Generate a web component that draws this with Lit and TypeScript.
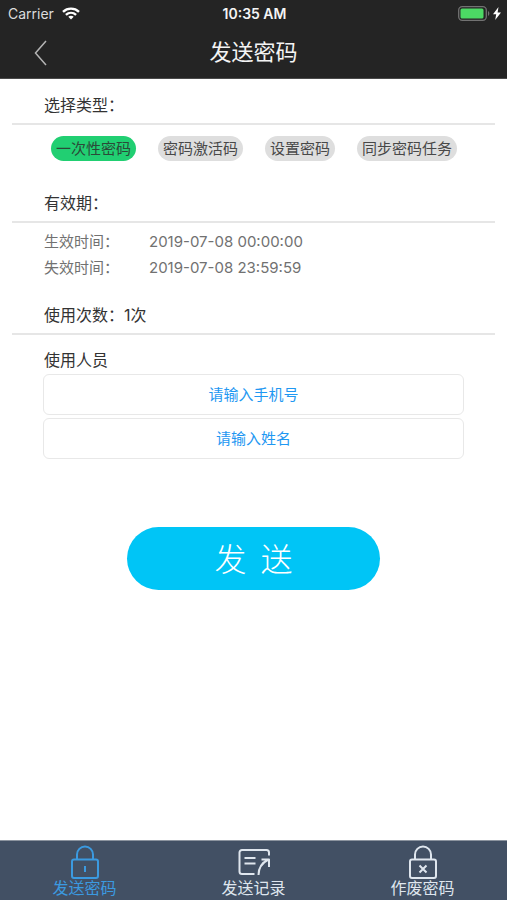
import { LitElement, html, css, svg } from "lit";
import { customElement, state } from "lit/decorators.js";
import { classMap } from "lit/directives/class-map.js";

const lockBody = svg`
  <path d="M9 14.500V9.500a8 8 0 0 1 16 0v5" />
  <rect x="4" y="14.500" width="26" height="18.500" rx="2" />
`;

const sendIcon = html`<svg class="tab-icon" viewBox="0 0 34 36" aria-hidden="true">
  ${lockBody}
  <path d="M17 21v6" />
</svg>`;

const recordIcon = html`<svg class="tab-icon" viewBox="0 0 34 36" aria-hidden="true">
  <path d="M32 10.500V7.500a2.500 2.500 0 0 0-2.500-2.500h-24.500A2.500 2.500 0 0 0 2.500 7.500v19A2.500 2.500 0 0 0 5 29h12.500" />
  <path d="M7.500 13h11M7.500 18.500h11" />
  <path d="M21.500 30c0-6 3-12 10-15.500M24.500 14.500h7.500v7.500" />
</svg>`;

const voidIcon = html`<svg class="tab-icon" viewBox="0 0 34 36" aria-hidden="true">
  ${lockBody}
  <path d="M13.500 20.500l7 7M20.500 20.500l-7 7" />
</svg>`;

@customElement("app-root")
export class AppRoot extends LitElement {
  @state() private type = "一次性密码";

  private types = ["一次性密码", "密码激活码", "设置密码", "同步密码任务"];

  private tabs = [
    { id: "send", label: "发送密码", icon: sendIcon },
    { id: "records", label: "发送记录", icon: recordIcon },
    { id: "void", label: "作废密码", icon: voidIcon },
  ];

  static styles = css`
    :host {
      display: flex;
      flex-direction: column;
      min-height: 100vh;
      background: #fff;
      color: #333;
      font-family: Inter, "Noto Sans CJK SC", sans-serif;
      font-size: 16px;
      line-height: 24px;
    }
    * {
      box-sizing: border-box;
    }
    button,
    input {
      font: inherit;
      margin: 0;
    }
    .top {
      background: #242424;
      color: #f4f4f4;
      border-bottom: 1px solid #4a4a4a;
    }
    .status,
    .nav {
      display: grid;
      grid-template-columns: 1fr auto 1fr;
      align-items: center;
    }
    .status {
      height: 27px;
      padding: 0 6px 0 8px;
      font-size: 14px;
    }
    .carrier,
    .power {
      display: flex;
      align-items: center;
      gap: 8px;
    }
    .carrier {
      color: #dcdcdc;
    }
    .clock {
      font-weight: 600;
    }
    .power {
      justify-content: flex-end;
      gap: 3px;
    }
    .wifi {
      width: 18px;
      height: 13px;
    }
    .battery {
      width: 32px;
      height: 15px;
    }
    .bolt {
      width: 8px;
      height: 13px;
    }
    .nav {
      height: 51px;
    }
    .back {
      display: flex;
      justify-self: start;
      padding: 8px 32px;
      border: 0;
      background: none;
      color: #b4b4b4;
    }
    .back svg {
      width: 16px;
      height: 26px;
    }
    .title {
      margin: 0;
      padding-bottom: 2px;
      font-size: 22px;
      line-height: 32px;
      font-weight: 400;
    }
    main {
      padding: 14px 12px 24px;
    }
    .heading {
      margin: 0;
      padding: 0 32px 6px;
      border-bottom: 2px solid #e6e6e6;
      font-size: 16px;
      font-weight: 400;
    }
    .types {
      display: flex;
      flex-wrap: wrap;
      gap: 12px 22px;
      padding: 11px 20px 30px 39px;
    }
    .chip {
      height: 25px;
      padding: 0 5px;
      border: 0;
      border-radius: 13px;
      background: #dedede;
      color: #484848;
      font-size: 15px;
      line-height: 25px;
      white-space: nowrap;
    }
    .chip.on {
      background: #21cf72;
      color: #2b4a38;
    }
    .times {
      display: grid;
      grid-template-columns: 105px 1fr;
      margin: 0;
      padding: 6px 32px 22px;
      color: #717171;
      font-size: 15px;
      line-height: 26px;
    }
    .times dd {
      margin: 0;
    }
    .people {
      display: flex;
      flex-direction: column;
      gap: 3px;
      margin: 0;
      padding: 14px 31px 0;
      border: 0;
    }
    .people legend {
      float: left;
      padding: 0 1px;
      line-height: 22px;
    }
    .field {
      width: 100%;
      height: 41px;
      padding: 0 12px;
      border: 1px solid #e8e8e8;
      border-radius: 6px;
      background: #fff;
      color: #1f98f2;
      font-size: 15px;
      text-align: center;
      outline: none;
    }
    .field::placeholder {
      color: #1f98f2;
      opacity: 1;
    }
    .send {
      display: block;
      width: 50vw;
      height: 63px;
      margin: 68px auto 0;
      padding: 0 0 4px;
      border: 0;
      border-radius: 32px;
      background: #00c5f6;
      color: #fff;
      font-family: "Noto Sans CJK SC", sans-serif;
      font-size: 32px;
      font-weight: 300;
      line-height: 48px;
    }
    .tabs {
      display: grid;
      grid-template-columns: repeat(3, 1fr);
      margin-top: auto;
      background: #425064;
      border-top: 1px solid #8c949f;
    }
    .tab {
      display: flex;
      flex-direction: column;
      align-items: center;
      height: 59px;
      padding-top: 4px;
      color: #dfe6ee;
      font-size: 16px;
      line-height: 15px;
      text-decoration: none;
    }
    .tab.on {
      color: #3b9ae0;
    }
    .tab-icon {
      width: 34px;
      height: 36px;
      fill: none;
      stroke: currentColor;
      stroke-width: 2;
      stroke-linejoin: round;
    }
  `;

  render() {
    return html`
      <header class="top">
        <div class="status">
          <span class="carrier">
            Carrier
            <svg class="wifi" viewBox="0 0 18 13" fill="none" stroke="#fff" stroke-width="2.400" aria-hidden="true">
              <path d="M1 4.800C5.500 .6 12.500 .6 17 4.800" />
              <path d="M3.900 7.900c3-2.700 7.200-2.700 10.200 0" />
              <path d="M9 12.500l-2.700-2.800c1.500-1.300 3.900-1.300 5.400 0z" fill="#fff" stroke="none" />
            </svg>
          </span>
          <span class="clock">10:35 AM</span>
          <span class="power">
            <svg class="battery" viewBox="0 0 32 15" aria-hidden="true">
              <rect x=".7" y=".7" width="27.600" height="13.600" rx="3.500" fill="none" stroke="#727272" stroke-width="1.300" />
              <rect x="2.500" y="2.500" width="23" height="10" rx="1.500" fill="#4cd964" />
              <path d="M30 5c1.800.8 1.800 4.200 0 5z" fill="#727272" />
            </svg>
            <svg class="bolt" viewBox="0 0 8 13" fill="#fff" aria-hidden="true">
              <path d="M5.500 0L0 7.200h3.200L2.200 13 8 5.500H4.600z" />
            </svg>
          </span>
        </div>
        <div class="nav">
          <button class="back" aria-label="返回">
            <svg viewBox="0 0 16 26" fill="none" stroke="currentColor" stroke-width="1.500" aria-hidden="true">
              <path d="M14 1L3.500 13 14 25" />
            </svg>
          </button>
          <h1 class="title">发送密码</h1>
        </div>
      </header>

      <main>
        <h2 class="heading">选择类型：</h2>
        <div class="types">
          ${this.types.map(
            (t) => html`<button
              class=${classMap({ chip: true, on: t === this.type })}
              aria-pressed=${t === this.type}
              @click=${() => (this.type = t)}
            >${t}</button>`
          )}
        </div>

        <h2 class="heading">有效期：</h2>
        <dl class="times">
          <dt>生效时间：</dt>
          <dd>2019-07-08 00:00:00</dd>
          <dt>失效时间：</dt>
          <dd>2019-07-08 23:59:59</dd>
        </dl>

        <h2 class="heading">使用次数：1次</h2>
        <fieldset class="people">
          <legend>使用人员</legend>
          <input class="field" type="tel" aria-label="手机号" placeholder="请输入手机号" />
          <input class="field" type="text" aria-label="姓名" placeholder="请输入姓名" />
        </fieldset>

        <button class="send">发&nbsp;&nbsp;送</button>
      </main>

      <nav class="tabs">
        ${this.tabs.map(
          (t, i) => html`<a class=${classMap({ tab: true, on: i === 0 })} href="#${t.id}">${t.icon}<span>${t.label}</span></a>`
        )}
      </nav>
    `;
  }
}
